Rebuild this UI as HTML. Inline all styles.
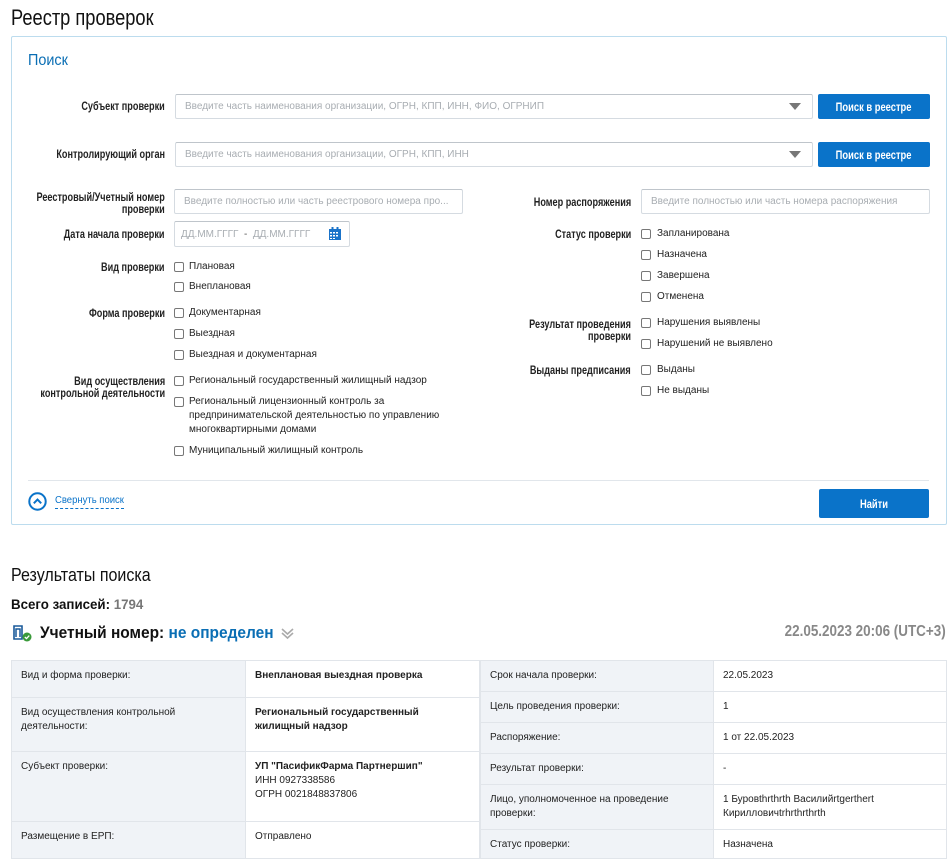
<!DOCTYPE html>
<html><head><meta charset="utf-8">
<style>
*{margin:0;padding:0;box-sizing:border-box}
body{width:951px;height:865px;background:#fff;position:relative;overflow:hidden;font-family:"Liberation Sans",Arial,sans-serif;color:#222}
.a{position:absolute;white-space:nowrap}
.sl{transform-origin:left center}
.sr{transform-origin:right center}
.lbl{position:absolute;font-size:12px;font-weight:bold;color:#222;text-align:right;line-height:12px;white-space:nowrap;transform:scaleX(.76);transform-origin:right top}
.inp{position:absolute;border:1px solid #d5dbe1;border-top-color:#bfc5cb;border-radius:2px;background:#fff;font-size:10px;color:#a8adb2;padding-left:9px;display:flex;align-items:center;white-space:nowrap;overflow:hidden}
.btn{position:absolute;background:#0a73c9;color:#fff;font-weight:bold;font-size:12px;display:flex;align-items:center;justify-content:center;border-radius:2px}
.btn span{display:inline-block;transform:scaleX(.78)}
.cb{position:absolute;width:10px;height:10px;border:1px solid #777;border-radius:2px;background:#fff}
.ct{position:absolute;font-size:10px;color:#222;white-space:nowrap;line-height:14px}
.arr{position:absolute;width:0;height:0;border-left:6px solid transparent;border-right:6px solid transparent;border-top:7px solid #777}
.cell{position:absolute;border:1px solid #e1e5ea;font-size:10px;line-height:14px;padding:8px 9px;color:#222}
.k{background:#f0f3f7}
</style></head><body>
<div class="a sl" style="left:11px;top:5px;font-size:22px;line-height:26px;color:#111;transform:scaleX(.83)">Реестр проверок</div>
<div class="a" style="left:11px;top:36px;width:936px;height:489px;border:1px solid #bcdcee;border-radius:2px"></div>
<div class="a sl" style="left:28px;top:51px;font-size:16px;color:#0a6eb4;line-height:20px;transform:scaleX(.9)">Поиск</div>

<div class="lbl" style="right:786px;top:100px">Субъект проверки</div>
<div class="inp" style="left:175px;top:94px;width:638px;height:25px">Введите часть наименования организации, ОГРН, КПП, ИНН, ФИО, ОГРНИП</div>
<div class="arr" style="left:789px;top:103px"></div>
<div class="btn" style="left:818px;top:94px;width:112px;height:25px"><span>Поиск в реестре</span></div>

<div class="lbl" style="right:786px;top:148px">Контролирующий орган</div>
<div class="inp" style="left:175px;top:142px;width:638px;height:25px">Введите часть наименования организации, ОГРН, КПП, ИНН</div>
<div class="arr" style="left:789px;top:151px"></div>
<div class="btn" style="left:818px;top:142px;width:112px;height:25px"><span>Поиск в реестре</span></div>

<div class="lbl" style="right:786px;top:191px">Реестровый/Учетный номер<br>проверки</div>
<div class="inp" style="left:174px;top:189px;width:289px;height:25px">Введите полностью или часть реестрового номера про...</div>
<div class="lbl" style="right:786px;top:228px">Дата начала проверки</div>
<div class="inp" style="left:174px;top:221px;width:176px;height:26px;padding-left:6px">ДД.ММ.ГГГГ&nbsp;&nbsp;<span style="color:#555">-</span>&nbsp;&nbsp;ДД.ММ.ГГГГ</div>
<svg class="a" style="left:329px;top:227px" width="12" height="13" viewBox="0 0 12 13"><rect x="0" y="2" width="12" height="11" fill="#1a73c9"/><rect x="2.5" y="0" width="2" height="3" fill="#1a73c9"/><rect x="7.5" y="0" width="2" height="3" fill="#1a73c9"/><g fill="#fff"><rect x="1" y="5" width="2" height="1.5"/><rect x="4" y="5" width="2" height="1.5"/><rect x="7" y="5" width="2" height="1.5"/><rect x="1" y="8" width="2" height="1.5"/><rect x="4" y="8" width="2" height="1.5"/><rect x="7" y="8" width="2" height="1.5"/><rect x="1" y="11" width="2" height="1"/><rect x="4" y="11" width="2" height="1"/></g></svg>

<div class="lbl" style="right:786px;top:261px">Вид проверки</div>
<div class="cb" style="left:174px;top:262px"></div><div class="ct" style="left:189px;top:260px">Плановая</div>
<div class="cb" style="left:174px;top:282px"></div><div class="ct" style="left:189px;top:280px">Внеплановая</div>
<div class="lbl" style="right:786px;top:307px">Форма проверки</div>
<div class="cb" style="left:174px;top:308px"></div><div class="ct" style="left:189px;top:306px">Документарная</div>
<div class="cb" style="left:174px;top:329px"></div><div class="ct" style="left:189px;top:327px">Выездная</div>
<div class="cb" style="left:174px;top:350px"></div><div class="ct" style="left:189px;top:348px">Выездная и документарная</div>
<div class="lbl" style="right:786px;top:375px">Вид осуществления<br>контрольной деятельности</div>
<div class="cb" style="left:174px;top:376px"></div><div class="ct" style="left:189px;top:374px">Региональный государственный жилищный надзор</div>
<div class="cb" style="left:174px;top:397px"></div><div class="ct" style="left:189px;top:395px">Региональный лицензионный контроль за<br>предпринимательской деятельностью по управлению<br>многоквартирными домами</div>
<div class="cb" style="left:174px;top:446px"></div><div class="ct" style="left:189px;top:444px">Муниципальный жилищный контроль</div>

<div class="lbl" style="right:320px;top:196px">Номер распоряжения</div>
<div class="inp" style="left:641px;top:189px;width:289px;height:25px">Введите полностью или часть номера распоряжения</div>
<div class="lbl" style="right:320px;top:228px">Статус проверки</div>
<div class="cb" style="left:641px;top:229px"></div><div class="ct" style="left:657px;top:227px">Запланирована</div>
<div class="cb" style="left:641px;top:250px"></div><div class="ct" style="left:657px;top:248px">Назначена</div>
<div class="cb" style="left:641px;top:271px"></div><div class="ct" style="left:657px;top:269px">Завершена</div>
<div class="cb" style="left:641px;top:292px"></div><div class="ct" style="left:657px;top:290px">Отменена</div>
<div class="lbl" style="right:320px;top:318px">Результат проведения<br>проверки</div>
<div class="cb" style="left:641px;top:318px"></div><div class="ct" style="left:657px;top:316px">Нарушения выявлены</div>
<div class="cb" style="left:641px;top:339px"></div><div class="ct" style="left:657px;top:337px">Нарушений не выявлено</div>
<div class="lbl" style="right:320px;top:364px">Выданы предписания</div>
<div class="cb" style="left:641px;top:365px"></div><div class="ct" style="left:657px;top:363px">Выданы</div>
<div class="cb" style="left:641px;top:386px"></div><div class="ct" style="left:657px;top:384px">Не выданы</div>

<div class="a" style="left:28px;top:480px;width:901px;height:1px;background:#e1e6eb"></div>
<svg class="a" style="left:28px;top:492px" width="19" height="19" viewBox="0 0 19 19"><circle cx="9.5" cy="9.5" r="8.2" fill="none" stroke="#0a73c9" stroke-width="2"/><path d="M5.8 11.3 L9.5 7.6 L13.2 11.3" fill="none" stroke="#0a73c9" stroke-width="2"/></svg>
<div class="a" style="left:55px;top:495px;font-size:10px;color:#0a73c9;line-height:12px;border-bottom:1px dashed #0a73c9;padding-bottom:1px;width:69px;overflow:hidden"><span style="display:inline-block;transform:scaleX(.95);transform-origin:left">Свернуть поиск</span></div>
<div class="btn" style="left:819px;top:489px;width:110px;height:29px"><span>Найти</span></div>

<div class="a sl" style="left:11px;top:564px;font-size:18px;line-height:22px;color:#111;transform:scaleX(.89)">Результаты поиска</div>
<div class="a sl" style="left:11px;top:595px;font-size:14px;font-weight:bold;line-height:18px;color:#111;transform:scaleX(.95)">Всего записей: <span style="color:#777">1794</span></div>
<svg class="a" style="left:11px;top:624px" width="22" height="18" viewBox="0 0 22 18"><path d="M3 2 H11 V15 H3 Z" fill="none" stroke="#1a5a9a" stroke-width="1.6"/><path d="M5 13 V5 H9 V13" fill="none" stroke="#1a5a9a" stroke-width="1.5"/><circle cx="16" cy="13" r="4.5" fill="#3a9a3a"/><path d="M13.8 13 L15.5 14.6 L18.3 11.6" fill="none" stroke="#fff" stroke-width="1.3"/></svg>
<div class="a sl" style="left:40px;top:622px;font-size:17px;font-weight:bold;line-height:22px;color:#111;transform:scaleX(.91)">Учетный номер: <span style="color:#0a6eb4">не определен</span></div>
<svg class="a" style="left:281px;top:627px" width="13" height="13" viewBox="0 0 13 13"><path d="M1 2 L6.5 7 L12 2 M1 6 L6.5 11 L12 6" fill="none" stroke="#aaa" stroke-width="1.6"/></svg>
<div class="a sr" style="right:5px;top:622px;font-size:16px;font-weight:bold;line-height:20px;color:#888;transform:scaleX(.84)">22.05.2023 20:06 (UTC+3)</div>

<div class="cell k" style="left:11px;top:660px;width:235px;height:38px">Вид и форма проверки:</div>
<div class="cell" style="left:245px;top:660px;width:235px;height:38px;font-weight:bold">Внеплановая выездная проверка</div>
<div class="cell k" style="left:11px;top:697px;width:235px;height:55px">Вид осуществления контрольной деятельности:</div>
<div class="cell" style="left:245px;top:697px;width:235px;height:55px;font-weight:bold">Региональный государственный жилищный надзор</div>
<div class="cell k" style="left:11px;top:751px;width:235px;height:71px">Субъект проверки:</div>
<div class="cell" style="left:245px;top:751px;width:235px;height:71px"><b>УП "ПасификФарма Партнершип"</b><br>ИНН 0927338586<br>ОГРН 0021848837806</div>
<div class="cell k" style="left:11px;top:821px;width:235px;height:38px">Размещение в ЕРП:</div>
<div class="cell" style="left:245px;top:821px;width:235px;height:38px">Отправлено</div>

<div class="cell k" style="left:480px;top:660px;width:234px;height:32px">Срок начала проверки:</div>
<div class="cell" style="left:713px;top:660px;width:234px;height:32px">22.05.2023</div>
<div class="cell k" style="left:480px;top:691px;width:234px;height:32px">Цель проведения проверки:</div>
<div class="cell" style="left:713px;top:691px;width:234px;height:32px">1</div>
<div class="cell k" style="left:480px;top:722px;width:234px;height:32px">Распоряжение:</div>
<div class="cell" style="left:713px;top:722px;width:234px;height:32px">1 от 22.05.2023</div>
<div class="cell k" style="left:480px;top:753px;width:234px;height:32px">Результат проверки:</div>
<div class="cell" style="left:713px;top:753px;width:234px;height:32px">-</div>
<div class="cell k" style="left:480px;top:784px;width:234px;height:46px">Лицо, уполномоченное на проведение проверки:</div>
<div class="cell" style="left:713px;top:784px;width:234px;height:46px">1 Буровthrthrth Василийrtgerthert Кирилловичtrhrthrthrth</div>
<div class="cell k" style="left:480px;top:829px;width:234px;height:30px">Статус проверки:</div>
<div class="cell" style="left:713px;top:829px;width:234px;height:30px">Назначена</div>
</body></html>
